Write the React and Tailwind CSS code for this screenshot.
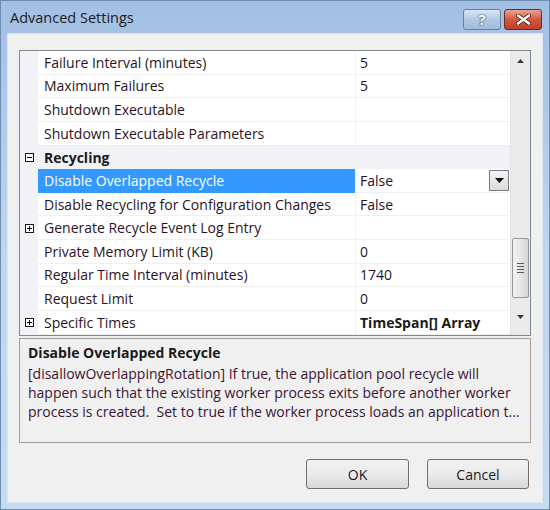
import React from 'react';

const rows = [
  { name: 'Failure Interval (minutes)', value: '5' },
  { name: 'Maximum Failures', value: '5' },
  { name: 'Shutdown Executable', value: '' },
  { name: 'Shutdown Executable Parameters', value: '' },
  { name: 'Recycling', category: true },
  { name: 'Disable Overlapped Recycle', value: 'False', selected: true },
  { name: 'Disable Recycling for Configuration Changes', value: 'False' },
  { name: 'Generate Recycle Event Log Entry', value: '', expand: true },
  { name: 'Private Memory Limit (KB)', value: '0' },
  { name: 'Regular Time Interval (minutes)', value: '1740' },
  { name: 'Request Limit', value: '0' },
  { name: 'Specific Times', value: 'TimeSpan[] Array', expand: true, bold: true },
];

function Box({ minus }) {
  return (
    <div className="relative w-[9px] h-[9px] border border-[#1a1a1a] bg-white">
      <div className="absolute left-[1px] right-[1px] top-[3px] h-px bg-black" />
      {!minus && <div className="absolute top-[1px] bottom-[1px] left-[3px] w-px bg-black" />}
    </div>
  );
}

function Row({ row }) {
  if (row.category) {
    return (
      <div className="flex items-center h-[23.64px] bg-[#f0f2f6]">
        <div className="w-[18px] flex justify-center">
          <Box minus />
        </div>
        <span className="pl-[6px] font-bold text-[#1a1a1a]">{row.name}</span>
      </div>
    );
  }
  return (
    <div className="flex h-[23.64px]">
      <div className="w-[18px] flex items-center justify-center bg-[#f0f2f6]">
        {row.expand && <Box />}
      </div>
      <div
        className={
          'w-[317px] flex items-center pl-[6px] whitespace-nowrap overflow-hidden border-b ' +
          (row.selected ? 'bg-[#3399ff] text-white border-[#3399ff]' : 'text-[#2a1226] border-[#f0f0f0]')
        }
      >
        {row.name}
      </div>
      <div className="w-px bg-[#f0f0f0]" />
      <div className="flex-1 flex items-center pl-[4px] border-b border-[#f0f0f0] text-[#2a1226]">
        <span className={row.bold ? 'font-bold text-[#1a1a1a]' : ''}>{row.value}</span>
        {row.selected && (
          <div className="ml-auto mr-[1px] w-[20px] h-[21px] border border-[#7a7a7a] bg-gradient-to-b from-[#f4f4f4] to-[#dcdcdc] flex items-center justify-center">
            <svg width="9" height="5" viewBox="0 0 9 5"><path d="M0 0h9L4.5 5z" fill="#111" /></svg>
          </div>
        )}
      </div>
    </div>
  );
}

export default function App() {
  return (
    <div
      className="w-[550px] h-[510px] flex flex-col bg-gradient-to-b from-[#a2c0e4] via-[#c0d5ee] to-[#c6daf0] border border-[#6f8db3] text-[14px]"
      style={{ fontFamily: '"Open Sans", "Noto Sans", sans-serif' }}
    >
      {/* Title bar */}
      <div className="h-[32px] flex items-start justify-between pl-[9px] pr-[7px]">
        <span className="mt-[6px] text-[14.5px] text-[#1c1c1c]">Advanced Settings</span>
        <div className="flex gap-[3px] mt-[8px]">
          <div className="w-[38px] h-[21px] rounded-[3px] border border-[#6d7f98] bg-gradient-to-b from-[#dbe7f5] via-[#b3c9e4] to-[#9fbbdd] flex items-center justify-center">
            <span className="text-white font-bold text-[15px] leading-none" style={{ textShadow: '0 0 2px #2b3f5c, 0 0 1px #2b3f5c' }}>?</span>
          </div>
          <div className="w-[38px] h-[21px] rounded-[3px] border border-[#6b2a22] bg-gradient-to-b from-[#e8a493] via-[#d2573f] to-[#c0402a] flex items-center justify-center">
            <svg width="15" height="11" viewBox="0 0 15 11">
              <path d="M2 1.5l11 8M13 1.5l-11 8" stroke="#5a1c12" strokeWidth="4" strokeLinecap="round" />
              <path d="M2 1.5l11 8M13 1.5l-11 8" stroke="#fff" strokeWidth="2.4" strokeLinecap="round" />
            </svg>
          </div>
        </div>
      </div>

      {/* Client area */}
      <div className="flex-1 mx-[6px] mb-[6px] bg-[#f0f0f0] border border-[#dde7f3] flex flex-col px-[11px] pt-[16px] pb-[13px]">
        {/* Property grid */}
        <div className="h-[286px] flex border border-[#828790] bg-white overflow-hidden">
          <div className="flex-1">
            {rows.map(r => (
              <Row key={r.name} row={r} />
            ))}
          </div>
          {/* Scrollbar */}
          <div className="w-[20px] bg-[#ebebeb] border-l border-[#e3e3e3] flex flex-col">
            <div className="h-[20px] flex items-center justify-center">
              <svg width="7" height="4" viewBox="0 0 7 4"><path d="M0 4h7L3.5 0z" fill="#3a3a3a" /></svg>
            </div>
            <div className="h-[167px]" />
            <div className="mx-[1px] h-[60px] rounded-[2px] border border-[#979797] bg-gradient-to-r from-[#f3f3f3] via-[#e6e6e6] to-[#d6d6d6] flex flex-col items-center justify-center gap-[2px]">
              <div className="w-[7px] h-px bg-[#5a5a5a]" />
              <div className="w-[7px] h-px bg-[#5a5a5a]" />
              <div className="w-[7px] h-px bg-[#5a5a5a]" />
              <div className="w-[7px] h-px bg-[#5a5a5a]" />
            </div>
            <div className="flex-1 flex items-center justify-center">
              <svg width="7" height="4" viewBox="0 0 7 4"><path d="M0 0h7L3.5 4z" fill="#3a3a3a" /></svg>
            </div>
          </div>
        </div>

        {/* Description */}
        <div className="mt-[2px] h-[105px] border border-[#a0a0a0] px-[8px] pt-[3px] leading-[19px] text-[#3a1432] whitespace-nowrap">
          <div className="font-bold text-[#1a1a1a] text-[14px] leading-[22px]">Disable Overlapped Recycle</div>
          <p>
            [disallowOverlappingRotation] If true, the application pool recycle will
            <br />
            happen such that the existing worker process exits before another worker
            <br />
            process is created.&nbsp; Set to true if the worker process loads an application t...
          </p>
        </div>

        {/* Buttons */}
        <div className="mt-auto flex justify-end gap-[18px] pr-[2px]">
          <button className="w-[103px] h-[30px] rounded-[3px] border border-[#707070] bg-gradient-to-b from-[#f2f2f2] via-[#ebebeb] to-[#d8d8d8] text-[#1a1a1a] text-[14px]">
            OK
          </button>
          <button className="w-[102px] h-[30px] rounded-[3px] border border-[#707070] bg-gradient-to-b from-[#f2f2f2] via-[#ebebeb] to-[#d8d8d8] text-[#1a1a1a] text-[14px]">
            Cancel
          </button>
        </div>
      </div>
    </div>
  );
}
